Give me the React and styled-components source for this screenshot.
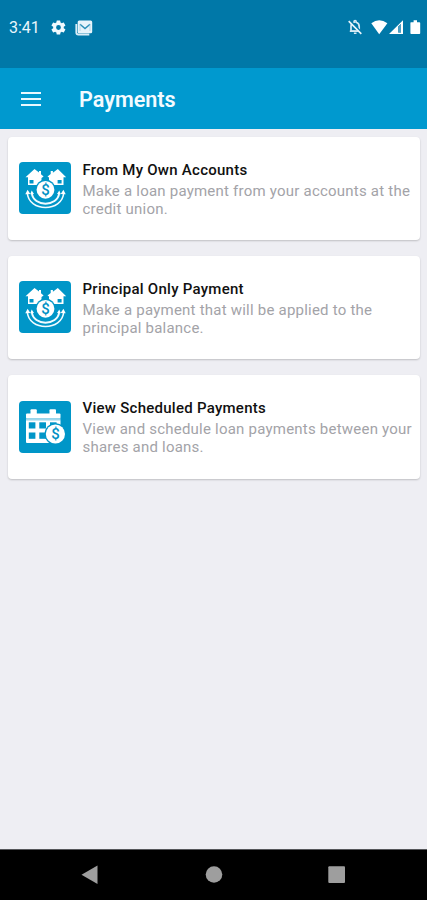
import styled, { createGlobalStyle } from "styled-components";

const payments = [
  {
    id: "own-accounts",
    icon: LoanIcon,
    title: "From My Own Accounts",
    lines: ["Make a loan payment from your accounts at the", "credit union."],
  },
  {
    id: "principal-only",
    icon: LoanIcon,
    title: "Principal Only Payment",
    lines: ["Make a payment that will be applied to the", "principal balance."],
  },
  {
    id: "scheduled",
    icon: CalendarIcon,
    title: "View Scheduled Payments",
    lines: [
      "View and schedule loan payments between your",
      "shares and loans.",
    ],
  },
];

export default function App() {
  return (
    <Screen>
      <GlobalStyle />
      <StatusBar>
        <StatusGroup>
          <Clock>3:41</Clock>
          <GearIcon />
          <MailIcon />
        </StatusGroup>
        <SystemIcons />
      </StatusBar>
      <AppBar>
        <MenuButton aria-label="Menu">
          <MenuLine />
          <MenuLine />
          <MenuLine />
        </MenuButton>
        <Title>Payments</Title>
      </AppBar>
      <CardList>
        {payments.map(({ id, icon: Icon, title, lines }) => (
          <Card key={id}>
            <Tile>
              <Icon />
            </Tile>
            <CardText>
              <CardTitle>{title}</CardTitle>
              {lines.map((line) => (
                <Description key={line}>{line}</Description>
              ))}
            </CardText>
          </Card>
        ))}
      </CardList>
      <NavBar>
        <svg width="427" height="51" viewBox="0 0 427 51" fill="#9e9e9e">
          <path d="M81.5 24.700 97.500 15.400V34Z" />
          <circle cx="214" cy="24.500" r="8.300" />
          <rect x="328.300" y="16.200" width="16.700" height="16.700" rx="1" />
        </svg>
      </NavBar>
    </Screen>
  );
}

function GearIcon() {
  return (
    <svg width="17" height="17" viewBox="0 0 24 24" fill="#f1faff">
      <path
        fillRule="evenodd"
        d="M19.4 13a7.5 7.5 0 0 0 0-2l2.1-1.6a.5.5 0 0 0 .1-.6l-2-3.5a.5.5 0 0 0-.6-.2l-2.5 1a7.3 7.3 0 0 0-1.7-1l-.4-2.6a.5.5 0 0 0-.5-.4h-4a.5.5 0 0 0-.5.4L9 5.100a7.7 7.7 0 0 0-1.7 1l-2.5-1a.5.5 0 0 0-.6.2l-2 3.500a.5.5 0 0 0 .1.6L4.500 11a7.9 7.9 0 0 0 0 2l-2.2 1.600a.5.5 0 0 0-.1.6l2 3.500c.1.2.4.3.6.2l2.500-1a7.3 7.3 0 0 0 1.700 1l.4 2.600c0 .2.2.4.5.4h4c.2 0 .5-.2.5-.4l.4-2.600a7.7 7.7 0 0 0 1.700-1l2.500 1c.2.1.5 0 .6-.2l2-3.500a.5.5 0 0 0-.1-.6ZM12 15.400a3.400 3.400 0 1 1 0-6.800 3.400 3.400 0 0 1 0 6.800Z"
      />
    </svg>
  );
}

function MailIcon() {
  return (
    <svg width="18" height="16" viewBox="0 0 18 16" fill="none">
      <path
        d="M1.300 4v8.500a2 2 0 0 0 2 2h11"
        stroke="#d9edf7"
        strokeWidth="1.800"
      />
      <rect x="2.700" y="0.500" width="14.500" height="12.700" rx="1.500" fill="#e6f4fb" />
      <path d="M5 4.300 10 8.500 15 4.300" stroke="#2a8fb8" strokeWidth="1.500" />
      <path d="M5 11V4.300M15 11V4.300" stroke="#a5cfe2" strokeWidth="0.800" />
    </svg>
  );
}

// Muted bell, wifi, cell signal and battery share one drawing
function SystemIcons() {
  return (
    <svg width="75" height="18" viewBox="0 0 75 18" fill="#fff">
      <path
        d="M4 13V8.500a4.300 4.300 0 0 1 3.100-4.200v-.8a1 1 0 0 1 2 0v.8a4.300 4.300 0 0 1 3.100 4.200V13Z"
        fill="none"
        stroke="#d5eaf4"
        strokeWidth="1.700"
      />
      <path
        d="M2.800 13.300H13M6.900 15.200h2.600"
        stroke="#d5eaf4"
        strokeWidth="1.500"
      />
      <path d="M3 3 14.800 15.400" stroke="#0078a8" strokeWidth="2.800" />
      <path d="M1.700 3.100 14.300 15.900" stroke="#eaf6fc" strokeWidth="1.600" />
      <path d="M24.300 5.300Q32.200-.8 40.400 5.300L32.200 16.200Z" />
      <path
        fillRule="evenodd"
        d="M42 15.900 56 2.200V15.900ZM51.200 8.600V14.600H54V6Z"
      />
      <path d="M51.200 8.600 54 6V14.600H51.200Z" fill="#4c9fc2" />
      <path d="M64 4.200h2.600V2.200h3.400v2h2.400a.8.800 0 0 1 .8.800v10.200a.8.800 0 0 1-.8.800H64.200a.8.800 0 0 1-.8-.8V5a.8.800 0 0 1 .6-.8Z" />
    </svg>
  );
}

function LoanIcon() {
  return (
    <svg width="52" height="52" viewBox="0 0 52 52" fill="#fff">
      <path
        fillRule="evenodd"
        d="M15.500 7 20 10.600V9h2v3.200L24.600 14.500 22.500 16V23H9V15.200H6.500ZM10.500 18v3.400h4V18Z"
      />
      <path
        fillRule="evenodd"
        d="M38.800 7 47.200 15.200H44.500V23H30V15.500L28.500 14.500 31.700 12V9h2.200v1.800ZM38.600 18v3.400h4V18Z"
      />
      <circle cx="26.500" cy="27.800" r="10.200" fill="#0096c8" />
      <circle cx="26.500" cy="27.800" r="8.900" />
      <Dollar x="26.500" y="33" textAnchor="middle" fontSize="15">
        $
      </Dollar>
      <g fill="none" stroke="#f2fbff">
        <path d="M8.300 31C9.800 50.300 43.200 50.300 44.700 31" strokeWidth="1.600" />
        <path
          d="M12.800 31C14.300 45.300 38.700 45.300 40.200 31"
          strokeWidth="2"
        />
      </g>
      <path d="M6.300 32.300 8.600 27.700 11.300 32ZM41.700 32 44.400 27.700 46.700 32.300Z" />
      <path d="M11.200 32.300 12.700 28.600 15 32ZM38 32 40.300 28.600 41.800 32.300Z" />
    </svg>
  );
}

function CalendarIcon() {
  return (
    <svg width="52" height="52" viewBox="0 0 52 52" fill="#fff">
      <rect x="11.500" y="8.200" width="6.300" height="6" rx="1" />
      <rect x="30.500" y="8.200" width="6.500" height="6" rx="1" />
      <rect x="7" y="12.600" width="34.500" height="5" rx="1" />
      <path d="M7 17.300h34.500v1.900H7Z" fill="#9fd8ec" />
      <path d="M7 19.200H41.500V41a1 1 0 0 1-1 1H8a1 1 0 0 1-1-1Z" />
      <g fill="#0096c8">
        <rect x="9.800" y="21.300" width="6.600" height="6.200" />
        <rect x="20.300" y="21.300" width="6.700" height="6.200" />
        <rect x="31" y="21.300" width="6.600" height="6.200" />
        <rect x="9.800" y="31.500" width="6.600" height="6.300" />
        <rect x="20.300" y="31.500" width="6.700" height="6.300" />
        <circle cx="36.400" cy="33" r="10.800" />
      </g>
      <circle cx="36.400" cy="33" r="9.600" />
      <Dollar x="36.400" y="38.300" textAnchor="middle" fontSize="15">
        $
      </Dollar>
    </svg>
  );
}

const GlobalStyle = createGlobalStyle`
  * {
    box-sizing: border-box;
  }

  body {
    margin: 0;
    font-family: Roboto, sans-serif;
  }
`;

const Screen = styled.div`
  display: flex;
  flex-direction: column;
  width: 427px;
  height: 900px;
  background: #eeeef3;
  overflow: hidden;
`;

const StatusBar = styled.div`
  display: flex;
  justify-content: space-between;
  align-items: flex-start;
  height: 67.5px;
  padding: 18px 5.5px 0 9px;
  background: #0078a8;
`;

const StatusGroup = styled.div`
  display: flex;
  align-items: center;
  gap: 8px;
  height: 19px;
`;

const Clock = styled.span`
  width: 33px;
  color: #e9f6fc;
  font-size: 16px;
  line-height: 20px;
  white-space: nowrap;
`;

const AppBar = styled.header`
  display: flex;
  align-items: center;
  height: 61px;
  padding: 3px 21px 0;
  background: #0099cf;
`;

const MenuButton = styled.button`
  display: flex;
  flex-direction: column;
  gap: 4px;
  width: 20px;
  margin: 0 38px 2px 0;
  padding: 0;
  border: 0;
  background: none;
`;

const MenuLine = styled.span`
  height: 2px;
  background: #e8f8ff;
`;

const Title = styled.h1`
  margin: 0;
  color: #f3fbff;
  font-size: 21.6px;
  font-weight: 600;
  line-height: 26px;
`;

const CardList = styled.main`
  display: flex;
  flex: 1;
  flex-direction: column;
  gap: 16px;
  padding: 8px 7px 0 8px;
`;

const Card = styled.section`
  display: flex;
  height: 103.4px;
  padding: 25.5px 0 0 11px;
  border-radius: 4px;
  background: #fff;
  box-shadow: 0 1px 2px rgba(0, 0, 0, 0.2);
`;

const Tile = styled.div`
  width: 52px;
  height: 52px;
  margin-right: 11.5px;
  border-radius: 4px;
  background: #0096c8;

  svg {
    display: block;
  }
`;

const CardText = styled.div`
  white-space: nowrap;
`;

const CardTitle = styled.h2`
  margin: -2.5px 0 2px;
  color: #111;
  font-size: 15px;
  font-weight: 500;
  line-height: 20px;
  letter-spacing: 0.26px;
`;

const Description = styled.p`
  margin: 0;
  color: #a3a3a8;
  font-size: 15px;
  line-height: 18px;
  letter-spacing: 0.22px;
`;

const Dollar = styled.text`
  fill: #0090c4;
  font-family: Roboto, sans-serif;
  font-weight: 500;
`;

const NavBar = styled.nav`
  height: 51.5px;
  border-top: 1px solid #55575a;
  background: #000;

  svg {
    display: block;
  }
`;
